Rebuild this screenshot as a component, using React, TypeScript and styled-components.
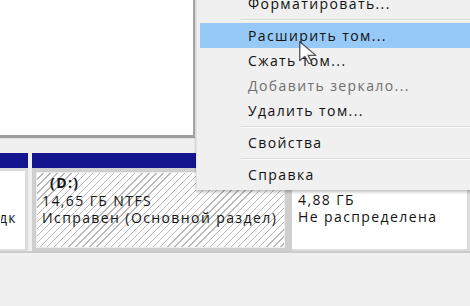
import styled, { createGlobalStyle } from 'styled-components';

const GlobalStyle = createGlobalStyle`
  html, body {
    margin: 0;
    padding: 0;
    background: #f0f0f0;
  }
  body {
    font-family: 'Open Sans', 'Noto Sans', sans-serif;
    font-size: 14px;
    letter-spacing: 1.4px;
    color: #141414;
  }
`;

const Screen = styled.div`
  position: relative;
  width: 470px;
  height: 306px;
  overflow: hidden;
  background: #f0f0f0;
  display: flex;
  flex-direction: column;
`;

const VolumeList = styled.div`
  width: 193px;
  height: 135px;
  background: #fff;
  border-right: 2px solid #a9a9a9;
  border-bottom: 3px solid #9e9e9e;
  box-sizing: content-box;
`;

const Strip = styled.div`
  height: 14px;
  border-top: 1px solid #e4e4e4;
`;

const DiskRow = styled.div`
  display: flex;
  height: 98px;
  border-bottom: 2px solid #cbcbcb;
`;

const Partition = styled.div<{ $width: string; $gap?: number }>`
  flex: ${({ $width }) => $width};
  margin-left: ${({ $gap }) => $gap ?? 0}px;
  display: flex;
  flex-direction: column;
  min-width: 0;
`;

const Bar = styled.div<{ $color: string }>`
  height: 15px;
  background: ${({ $color }) => $color};
  flex: none;
`;

const Frame = styled.div<{ $selected?: boolean }>`
  flex: 1;
  display: flex;
  padding: ${({ $selected }) => ($selected ? '4px 7px 3px 4px' : '3px 3px 2px 0')};
  background: ${({ $selected }) => ($selected ? '#cfcfcf' : '#dcdcdc')};
  min-width: 0;
`;

const Box = styled.div<{ $hatched?: boolean; $clipLeft?: boolean }>`
  flex: 1;
  min-width: 0;
  overflow: hidden;
  display: flex;
  justify-content: ${({ $clipLeft }) => ($clipLeft ? 'flex-end' : 'flex-start')};
  border: 1px solid ${({ $hatched }) => ($hatched ? '#ececec' : '#fff')};
  background: ${({ $hatched }) =>
    $hatched
      ? 'repeating-linear-gradient(135deg, #fdfdfd 0 4px, #b8b8b8 4px 5px)'
      : '#fff'};
  padding: ${({ $clipLeft }) => ($clipLeft ? '2px 7px 0 0' : '1px 0 0 5px')};
`;

const Lines = styled.div`
  flex: none;
  display: flex;
  flex-direction: column;
  line-height: 17.5px;
  white-space: nowrap;
`;

const Line = styled.div<{ $bold?: boolean; $indent?: number }>`
  font-weight: ${({ $bold }) => ($bold ? 700 : 400)};
  padding-left: ${({ $indent }) => $indent ?? 0}px;
  min-height: 17.5px;
`;

const Menu = styled.div`
  position: absolute;
  left: 196px;
  top: -12px;
  width: 278px;
  padding: 3px 0 3px 3px;
  background: #f0f0f0;
  border-left: 1px solid #e2e2e2;
  box-shadow: 0 2px 3px rgba(0, 0, 0, 0.25);
  display: flex;
  flex-direction: column;
`;

const Item = styled.div<{ $active?: boolean; $disabled?: boolean }>`
  height: 25px;
  display: flex;
  align-items: center;
  padding-left: 48px;
  color: ${({ $disabled }) => ($disabled ? '#6e6e6e' : '#111')};
  background: ${({ $active }) => ($active ? '#96c9f5' : 'transparent')};
`;

const Separator = styled.div`
  height: 7px;
  display: flex;
  align-items: center;
  padding-left: 41px;
  &::after {
    content: '';
    flex: 1;
    height: 1px;
    background: #d9d9d9;
    border-bottom: 1px solid #fbfbfb;
  }
`;

const Cursor = styled.svg`
  position: absolute;
  left: 299px;
  top: 41px;
  opacity: 0.85;
`;

const menuItems: Array<{ label: string; active?: boolean; disabled?: boolean } | 'sep'> = [
  { label: 'Форматировать...' },
  'sep',
  { label: 'Расширить том...', active: true },
  { label: 'Сжать том...' },
  { label: 'Добавить зеркало...', disabled: true },
  { label: 'Удалить том...' },
  'sep',
  { label: 'Свойства' },
  'sep',
  { label: 'Справка' },
];

const App = () => {
  return (
    <>
      <GlobalStyle />
      <Screen>
        <VolumeList />
        <Strip />
        <DiskRow>
          <Partition $width="0 0 28px">
            <Bar $color="#14148f" />
            <Frame>
              <Box $clipLeft>
                <Lines>
                  <Line>Зарезервировано</Line>
                  <Line>350 МБ NTFS</Line>
                  <Line>Исправен (Система, Активен, Основной раздк</Line>
                </Lines>
              </Box>
            </Frame>
          </Partition>
          <Partition $width="0 0 260px" $gap={4}>
            <Bar $color="#14148f" />
            <Frame $selected>
              <Box $hatched>
                <Lines>
                  <Line $bold $indent={8}>(D:)</Line>
                  <Line>14,65 ГБ NTFS</Line>
                  <Line>Исправен (Основной раздел)</Line>
                </Lines>
              </Box>
            </Frame>
          </Partition>
          <Partition $width="1 1 auto">
            <Bar $color="#111" />
            <Frame>
              <Box>
                <Lines>
                  <Line />
                  <Line>4,88 ГБ</Line>
                  <Line>Не распределена</Line>
                </Lines>
              </Box>
            </Frame>
          </Partition>
        </DiskRow>
        <Menu>
          {menuItems.map((item, i) =>
            item === 'sep' ? (
              <Separator key={i} />
            ) : (
              <Item key={i} $active={item.active} $disabled={item.disabled}>
                {item.label}
              </Item>
            )
          )}
        </Menu>
        <Cursor width="19" height="24" viewBox="0 0 13 19" preserveAspectRatio="none">
          <path
            d="M0.5 0.5 L0.5 15.5 L4 12.2 L6.8 18 L8.8 17.1 L6.2 11.4 L11.5 11.4 Z"
            fill="#fff"
            stroke="#3a3a3a"
            strokeWidth="0.9"
            strokeLinejoin="round"
          />
        </Cursor>
      </Screen>
    </>
  );
};

export default App;
